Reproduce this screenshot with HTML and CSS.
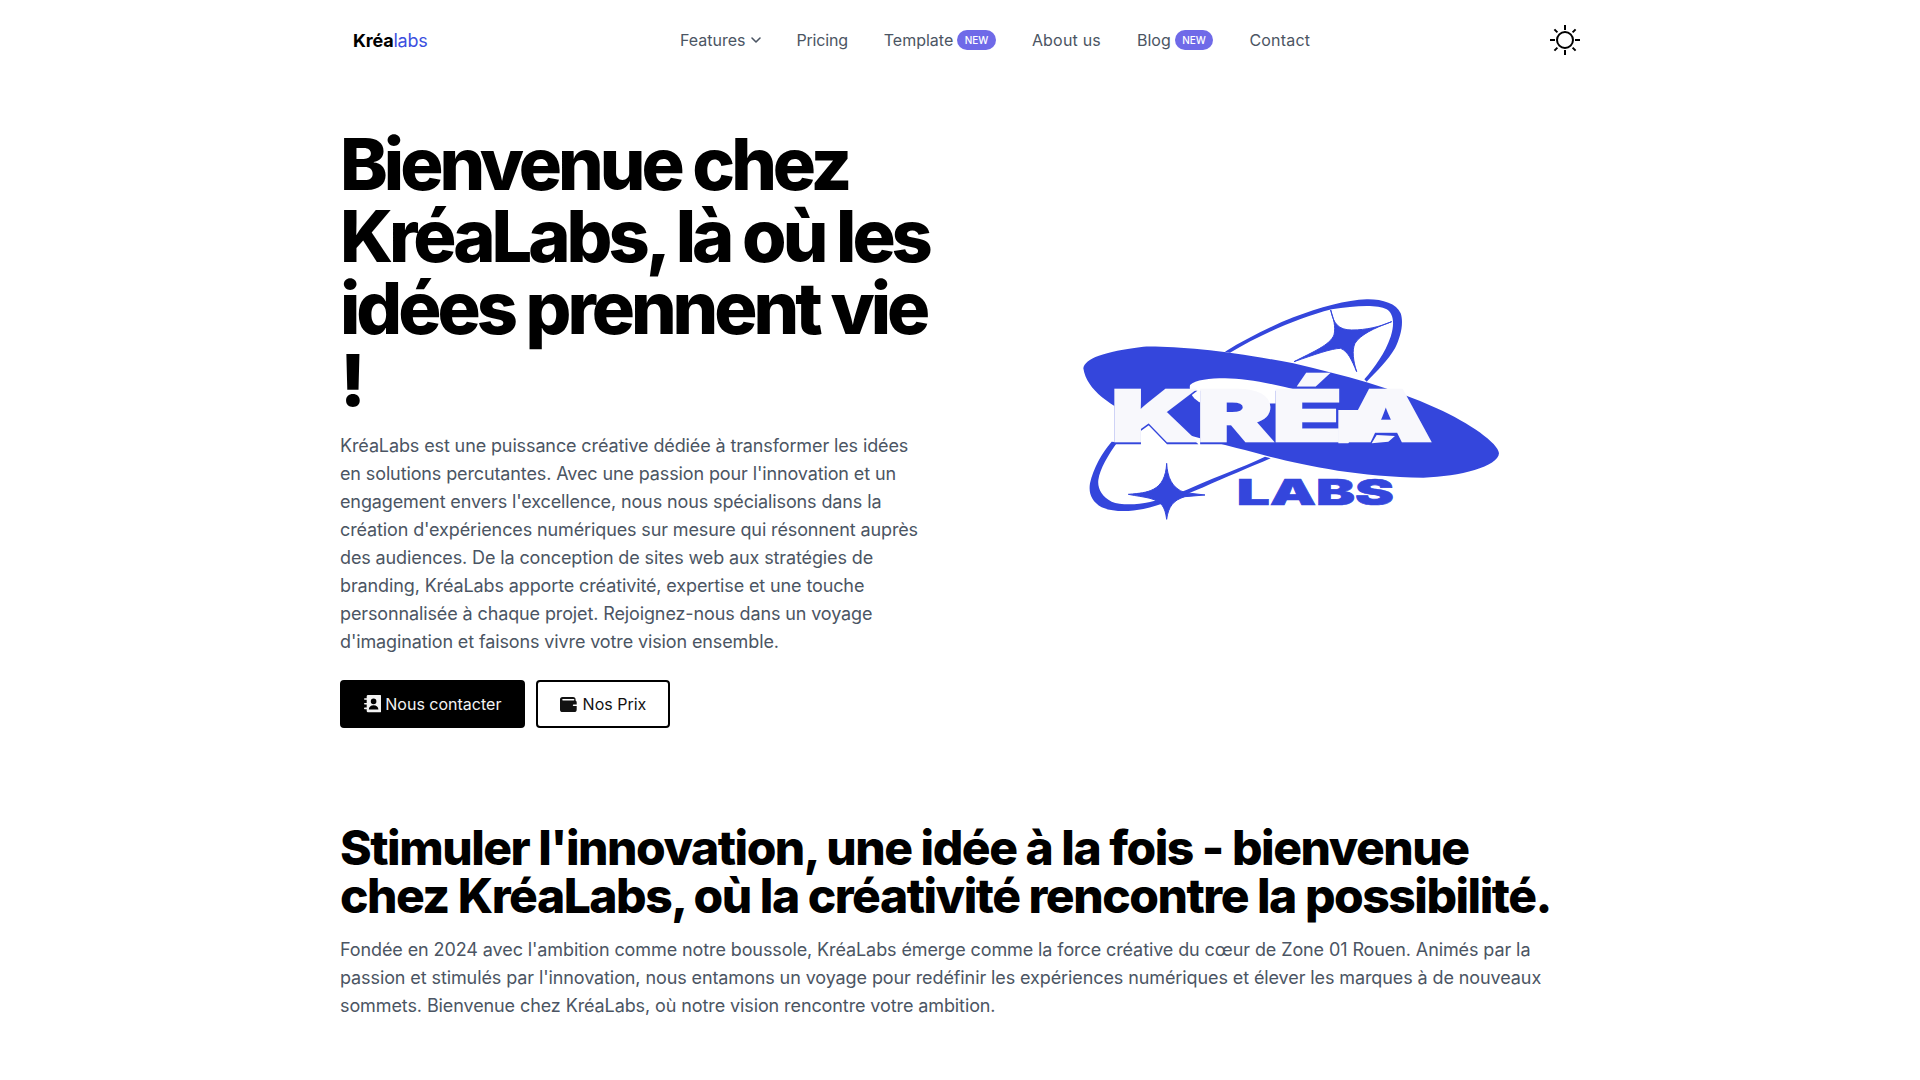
FILE: index.html
```html
<!DOCTYPE html>
<html lang="fr">
<head>
<meta charset="utf-8">
<title>KréaLabs</title>
<link rel="stylesheet" href="styles.css">
</head>
<body>
<div class="page">
  <header class="nav">
    <a class="brand" href="#"><b>Kréa</b><span>labs</span></a>
    <ul class="links">
      <li><a class="has-chev" href="#">Features <svg class="chev" viewBox="0 0 20 20"><path d="M5 7.5l5 5 5-5" fill="none" stroke="currentColor" stroke-width="2" stroke-linecap="round" stroke-linejoin="round"/></svg></a></li>
      <li><a class="tight" href="#">Pricing</a></li>
      <li><a href="#">Template <span class="badge">NEW</span></a></li>
      <li><a class="wide" href="#">About us</a></li>
      <li><a href="#">Blog <span class="badge">NEW</span></a></li>
      <li><a class="wide" href="#">Contact</a></li>
    </ul>
    <svg class="sun" viewBox="0 0 32 32" fill="none" stroke="#000" stroke-width="2" stroke-linecap="butt">
      <circle cx="16" cy="16" r="8"/>
      <path d="M16 1v5M16 26v5M1 16h5M26 16h5M5.4 5.4l3 3M23.6 23.6l3 3M5.4 26.6l3-3M23.6 8.4l3-3"/>
    </svg>
  </header>

  <section class="hero">
    <div class="hero-text">
      <h1>Bienvenue chez KréaLabs, là où les idées prennent vie !</h1>
      <p>KréaLabs est une puissance créative dédiée à transformer les idées en solutions percutantes. Avec une passion pour l'innovation et un engagement envers l'excellence, nous nous spécialisons dans la création d'expériences numériques sur mesure qui résonnent auprès des audiences. De la conception de sites web aux stratégies de branding, KréaLabs apporte créativité, expertise et une touche personnalisée à chaque projet. Rejoignez-nous dans un voyage d'imagination et faisons vivre votre vision ensemble.</p>
      <div class="actions">
        <a class="btn btn-dark" href="#">
          <svg class="icon-book" viewBox="0 0 17.3 17.3"><path fill="currentColor" fill-rule="evenodd" d="M4 0H16a1.3 1.3 0 0 1 1.3 1.3V16a1.3 1.3 0 0 1-1.3 1.3H4A1.3 1.3 0 0 1 2.7 16V14.2H.8a.8.8 0 0 1 0-1.6H2.7V9.5H.8a.8.8 0 0 1 0-1.6H2.7V4.8H.8a.8.8 0 0 1 0-1.6H2.7V1.3A1.3 1.3 0 0 1 4 0zM9.6 3.6a2.8 2.8 0 1 0 0 5.6 2.8 2.8 0 0 0 0-5.6zM4.8 14.4h9.6c0-2.6-2-4.2-4.8-4.2s-4.8 1.6-4.8 4.2z"/></svg>
          Nous contacter
        </a>
        <a class="btn btn-light" href="#">
          <svg class="icon-wallet" viewBox="0 0 16.7 15"><path fill="currentColor" fill-rule="evenodd" d="M2.6 0H13a2.6 2.6 0 0 1 2.6 2.6v.9a1.8 1.8 0 0 1 1.1 1.7v7.2a2.6 2.6 0 0 1-2.6 2.6H2.6A2.6 2.6 0 0 1 0 12.4V2.6A2.6 2.6 0 0 1 2.6 0zM3 2a.8.8 0 0 0 0 1.6h10.6a.8.8 0 0 0 0-1.6zM13.6 7.4a.8.8 0 0 0 0 1.6h3.1V7.4z"/></svg>
          Nos Prix
        </a>
      </div>
    </div>
    <div class="hero-art">
      <svg class="logo" viewBox="0 -152 460 600" aria-label="Kréa Labs">
        <g transform="scale(0.33333)" fill="#3446dc">
          <path d="M495,215 C560,175 630,140 700,112 C780,82 860,60 920,58 C965,57 1010,70 1022,100 C1032,130 1022,170 1005,205 C985,240 950,275 920,305 L913,298 C945,260 975,220 992,170 C1005,130 1000,100 980,88 C950,72 880,78 815,88 C710,115 600,165 510,218 Z"/>
          <path d="M155,485 C125,520 100,565 90,610 C85,640 95,665 125,682 C160,697 210,695 250,687 C300,678 360,650 430,622 C500,590 570,562 632,535 L615,530 C540,565 470,590 420,612 C370,635 320,655 270,666 C225,676 180,675 155,665 C125,650 112,625 115,600 C120,565 145,525 172,487 Z"/>
          <path class="logo-star" d="M812,90 C820,130 835,150 875,150 C920,150 960,140 995,125 C940,145 900,165 885,190 C875,210 880,245 890,275 C875,240 865,215 842,205 C815,205 760,225 702,245 C760,215 810,195 822,165 C828,140 820,115 812,90 Z"/>
          <path class="logo-star" d="M320,550 C322,590 335,625 375,638 L435,645 L375,650 C340,660 325,680 320,718 C315,680 305,665 270,655 C250,650 230,648 205,643 C240,640 260,638 280,628 C305,615 318,590 320,550 Z"/>
          <path d="M70,265 C75,235 130,215 250,200 C350,198 500,212 700,250 C850,285 1000,325 1130,385 C1230,430 1315,490 1317,520 C1315,560 1200,590 1090,593 C900,590 750,560 630,530 C500,495 350,460 250,420 C150,380 80,330 70,265 Z"/>
          <path fill="#fff" d="M390,315 C405,300 450,295 495,295 C560,296 640,312 720,332 L720,370 L430,372 C410,365 385,345 390,315 Z"/>
          <text class="logo-main logo-shade" x="154" y="490" textLength="960" lengthAdjust="spacingAndGlyphs">KRÉA</text>
          <path fill="#f8f8fc" d="M835,390 L930,390 L865,490 L835,490 Z M935,490 L950,465 L1005,468 L985,485 Z"/>
          <text class="logo-main" x="154" y="483" textLength="960" lengthAdjust="spacingAndGlyphs">KRÉA</text>
          <text class="logo-sub" x="530" y="675" textLength="472" lengthAdjust="spacingAndGlyphs">LABS</text>
        </g>
      </svg>
    </div>
  </section>

  <section class="about">
    <h2>Stimuler l'innovation, une idée à la fois - bienvenue chez KréaLabs, où la créativité rencontre la possibilité.</h2>
    <p>Fondée en 2024 avec l'ambition comme notre boussole, KréaLabs émerge comme la force créative du cœur de Zone 01 Rouen. Animés par la passion et stimulés par l'innovation, nous entamons un voyage pour redéfinir les expériences numériques et élever les marques à de nouveaux sommets. Bienvenue chez KréaLabs, où notre vision rencontre votre ambition.</p>
  </section>
</div>
</body>
</html>
```
FILE: styles.css
```css
* { box-sizing: border-box; }
html, body { margin: 0; padding: 0; background: #fff; }
body { font-family: Inter, "Liberation Sans", sans-serif; color: #000; }
a { color: inherit; text-decoration: none; }
.page { width: 1240px; margin: 0 auto; }

.nav { height: 80px; display: flex; align-items: center; padding-left: 13px; }
.brand { font-size: 18px; width: 74px; white-space: nowrap; letter-spacing: -0.2px; }
.brand b { font-weight: 700; }
.brand span { color: #3b4fe0; font-weight: 400; }
.links { list-style: none; display: flex; align-items: center; gap: 36px; margin: 0 0 0 253px; padding: 0; font-size: 16px; color: #4b5563; }
.links a { display: flex; align-items: center; gap: 4px; white-space: nowrap; }
.links a.has-chev { gap: 2px; margin-right: -3px; }
.links a.tight { letter-spacing: -0.2px; }
.links a.wide { letter-spacing: 0.2px; }
.chev { width: 16px; height: 16px; }
.badge { background: #6f6ae8; color: #fff; font-size: 10px; font-weight: 500; line-height: 20px; height: 20px; padding: 0 7.5px; border-radius: 10px; }
.sun { width: 32px; height: 32px; margin-left: auto; margin-right: -1px; }

.hero { display: grid; grid-template-columns: 600px 1fr; column-gap: 60px; padding-top: 48px; }
h1 { margin: 0; font-size: 72px; line-height: 72px; font-weight: 800; letter-spacing: -0.056em; width: 600px; }
.hero-text p { margin: 16px 0 0; font-size: 18px; line-height: 28px; color: #4b5563; width: 590px; letter-spacing: -0.12px; }
.actions { display: flex; gap: 11px; margin-top: 24px; }
.btn { height: 48px; display: inline-flex; align-items: center; gap: 4px; padding: 0 21.5px 0 22px; font-size: 16px; border-radius: 4px; border: 2px solid #000; }
.btn-dark { background: #000; color: #f3f3f3; }
.btn-light { background: #fff; color: #111; gap: 6px; }
.icon-book { width: 17.3px; height: 17.3px; }
.icon-wallet { width: 16.7px; height: 15px; }
.hero-art { display: flex; justify-content: center; align-items: center; }
.logo { width: 460px; height: 600px; }
.logo text { font-family: Inter, "Liberation Sans", sans-serif; font-weight: 900; stroke-linejoin: miter; }
.logo-star { stroke: #3446dc; stroke-width: 3px; stroke-linejoin: round; }
.logo-main { font-size: 210px; fill: #f8f8fc; stroke: #f8f8fc; stroke-width: 8px; }
.logo-main.logo-shade { fill: #3446dc; stroke: #3446dc; }
.logo-sub { font-size: 108px; fill: #3446dc; stroke: #3446dc; stroke-width: 2px; }

.about { padding-top: 96px; }
h2 { margin: 0; font-size: 48px; line-height: 48px; font-weight: 800; letter-spacing: -0.031em; }
.about p { margin: 16px 0 0; font-size: 18px; line-height: 28px; color: #4b5563; letter-spacing: -0.1px; }
```
